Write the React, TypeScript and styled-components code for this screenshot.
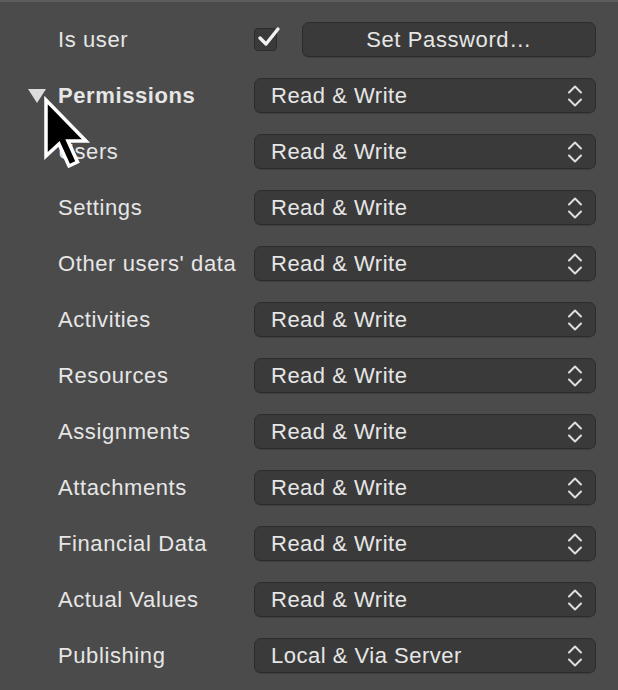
import styled, { createGlobalStyle } from 'styled-components';

const GlobalStyle = createGlobalStyle`
  html, body {
    margin: 0;
    padding: 0;
    background: #4b4b4b;
  }
  body {
    font-family: "Liberation Sans", Arial, sans-serif;
    -webkit-font-smoothing: antialiased;
  }
`;

const Panel = styled.div`
  position: relative;
  width: 618px;
  height: 690px;
  box-sizing: border-box;
  border-top: 2px solid #5d5d5d;
  background: #4b4b4b;
  padding: 20px 22px 0 58px;
  display: grid;
  grid-template-columns: 196px 1fr;
  grid-auto-rows: 35px;
  row-gap: 21px;
  align-items: center;
  overflow: hidden;
`;

const Label = styled.div<{ $bold?: boolean }>`
  display: flex;
  align-items: center;
  gap: 12px;
  font-size: 22px;
  letter-spacing: 0.6px;
  font-weight: ${(p) => (p.$bold ? 700 : 400)};
  color: #e6e6e6;
  white-space: nowrap;
`;

const Disclosure = styled.span`
  margin-left: -30px;
  width: 0;
  height: 0;
  border-left: 9px solid transparent;
  border-right: 9px solid transparent;
  border-top: 14px solid #dcdcdc;
`;

const ControlRow = styled.div`
  display: flex;
  align-items: center;
  gap: 25px;
  height: 35px;
`;

const CheckBox = styled.span`
  position: relative;
  width: 23px;
  height: 23px;
  box-sizing: border-box;
  border-radius: 4px;
  background: #3a3a3a;
  border: 1px solid #2b2b2b;
  flex: none;
  svg {
    position: absolute;
    left: 2px;
    top: -2px;
    overflow: visible;
  }
`;

const PushButton = styled.button`
  flex: 1;
  height: 35px;
  box-sizing: border-box;
  border-radius: 7px;
  background: #3a3a3a;
  border: 1px solid #2c2c2c;
  box-shadow: 0 1px 0 rgba(0, 0, 0, 0.15);
  color: #e6e6e6;
  font-family: inherit;
  font-size: 22px;
  letter-spacing: 0.6px;
  padding: 0;
`;

const PopUp = styled.div`
  display: flex;
  align-items: center;
  justify-content: space-between;
  height: 35px;
  box-sizing: border-box;
  border-radius: 7px;
  background: #3a3a3a;
  border: 1px solid #2c2c2c;
  box-shadow: 0 1px 0 rgba(0, 0, 0, 0.15);
  padding: 0 13px 0 16px;
  color: #e6e6e6;
  font-size: 22px;
  letter-spacing: 0.5px;
`;

const Cursor = styled.svg`
  position: absolute;
  left: 44px;
  top: 96px;
  overflow: visible;
`;

function Chevrons() {
  return (
    <svg width="14" height="22" viewBox="0 0 14 22">
      <path
        d="M1 7.5 L7 1.5 L13 7.5 M1 14.5 L7 20.5 L13 14.5"
        fill="none"
        stroke="#dedede"
        strokeWidth="2"
        strokeLinecap="round"
        strokeLinejoin="round"
      />
    </svg>
  );
}

const rows: [string, string][] = [
  ['Users', 'Read & Write'],
  ['Settings', 'Read & Write'],
  ["Other users' data", 'Read & Write'],
  ['Activities', 'Read & Write'],
  ['Resources', 'Read & Write'],
  ['Assignments', 'Read & Write'],
  ['Attachments', 'Read & Write'],
  ['Financial Data', 'Read & Write'],
  ['Actual Values', 'Read & Write'],
  ['Publishing', 'Local & Via Server'],
];

export default function App() {
  return (
    <>
      <GlobalStyle />
      <Panel>
        <Label>Is user</Label>
        <ControlRow>
          <CheckBox>
            <svg width="22" height="20" viewBox="0 0 22 20">
              <path
                d="M3 11 L9 17 L21 2"
                fill="none"
                stroke="#f2f2f2"
                strokeWidth="3.4"
                strokeLinecap="round"
                strokeLinejoin="round"
              />
            </svg>
          </CheckBox>
          <PushButton>Set Password…</PushButton>
        </ControlRow>

        <Label $bold>
          <Disclosure />
          Permissions
        </Label>
        <PopUp>
          Read &amp; Write
          <Chevrons />
        </PopUp>

        {rows.map(([label, value]) => (
          <>
            <Label key={label}>{label}</Label>
            <PopUp key={label + '-v'}>
              {value}
              <Chevrons />
            </PopUp>
          </>
        ))}

        <Cursor width="46" height="72" viewBox="0 0 46 72">
          <path
            d="M2 2 L2 58 L15 46 L25 68 L33.5 64 L24 43 L42 43 Z"
            fill="#000"
            stroke="#fff"
            strokeWidth="3.5"
            strokeLinejoin="miter"
          />
        </Cursor>
      </Panel>
    </>
  );
}
